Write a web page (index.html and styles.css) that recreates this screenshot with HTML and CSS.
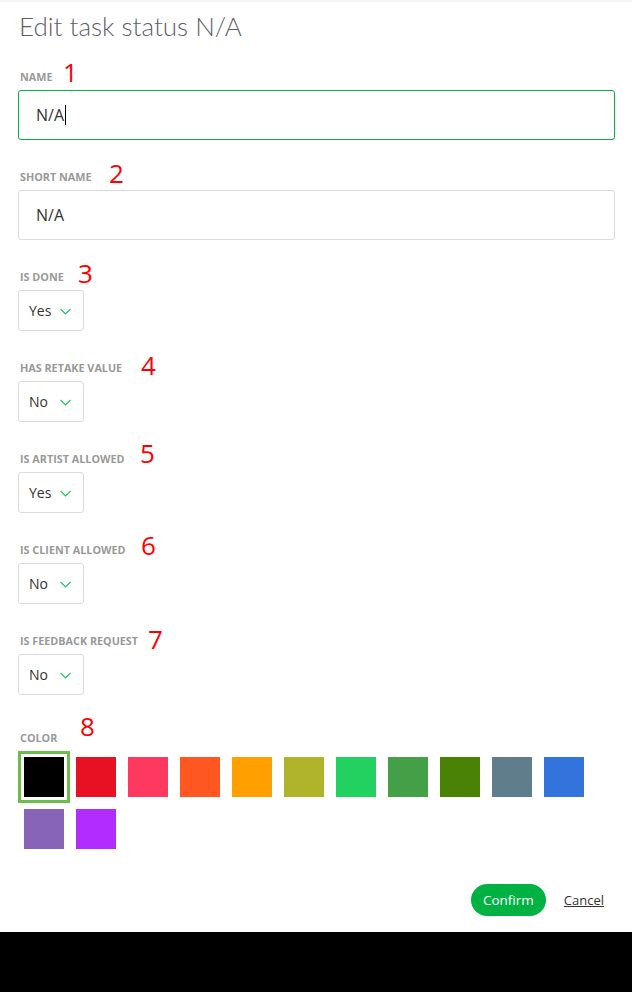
FILE: index.html
```html
<!DOCTYPE html>
<html>
<head>
<meta charset="utf-8">
<link rel="stylesheet" href="styles.css">
</head>
<body>
<div class="panel">
  <h1 class="title">Edit task status N/A</h1>

  <div class="field">
    <div class="label-row"><span class="label">Name</span><span class="num n1">1</span></div>
    <div class="input focused"><span>N/A</span><span class="caret"></span></div>
  </div>

  <div class="field">
    <div class="label-row"><span class="label">Short name</span><span class="num n2">2</span></div>
    <div class="input"><span>N/A</span></div>
  </div>

  <div class="field">
    <div class="label-row"><span class="label">Is done</span><span class="num n3">3</span></div>
    <div class="select"><span class="select-text">Yes</span><svg class="chev" width="11" height="7" viewBox="0 0 11 7"><polyline points="0.5,1 5.5,6 10.5,1" fill="none" stroke="#22c55e" stroke-width="1.2"/></svg></div>
  </div>

  <div class="field">
    <div class="label-row"><span class="label">Has retake value</span><span class="num n4">4</span></div>
    <div class="select"><span class="select-text">No</span><svg class="chev" width="11" height="7" viewBox="0 0 11 7"><polyline points="0.5,1 5.5,6 10.5,1" fill="none" stroke="#22c55e" stroke-width="1.2"/></svg></div>
  </div>

  <div class="field">
    <div class="label-row"><span class="label">Is artist allowed</span><span class="num n5">5</span></div>
    <div class="select"><span class="select-text">Yes</span><svg class="chev" width="11" height="7" viewBox="0 0 11 7"><polyline points="0.5,1 5.5,6 10.5,1" fill="none" stroke="#22c55e" stroke-width="1.2"/></svg></div>
  </div>

  <div class="field">
    <div class="label-row"><span class="label">Is client allowed</span><span class="num n6">6</span></div>
    <div class="select"><span class="select-text">No</span><svg class="chev" width="11" height="7" viewBox="0 0 11 7"><polyline points="0.5,1 5.5,6 10.5,1" fill="none" stroke="#22c55e" stroke-width="1.2"/></svg></div>
  </div>

  <div class="field">
    <div class="label-row"><span class="label">Is feedback request</span><span class="num n7">7</span></div>
    <div class="select"><span class="select-text">No</span><svg class="chev" width="11" height="7" viewBox="0 0 11 7"><polyline points="0.5,1 5.5,6 10.5,1" fill="none" stroke="#22c55e" stroke-width="1.2"/></svg></div>
  </div>

  <div class="field color-field">
    <div class="label-row"><span class="label">Color</span><span class="num n8">8</span></div>
    <div class="colors">
      <div class="swatch-item selected"><div class="swatch c-black"></div></div>
      <div class="swatch-item"><div class="swatch c-red"></div></div>
      <div class="swatch-item"><div class="swatch c-pink"></div></div>
      <div class="swatch-item"><div class="swatch c-orange"></div></div>
      <div class="swatch-item"><div class="swatch c-amber"></div></div>
      <div class="swatch-item"><div class="swatch c-olive"></div></div>
      <div class="swatch-item"><div class="swatch c-green"></div></div>
      <div class="swatch-item"><div class="swatch c-green2"></div></div>
      <div class="swatch-item"><div class="swatch c-green3"></div></div>
      <div class="swatch-item"><div class="swatch c-bluegrey"></div></div>
      <div class="swatch-item"><div class="swatch c-blue"></div></div>
      <div class="swatch-item"><div class="swatch c-purple"></div></div>
      <div class="swatch-item"><div class="swatch c-violet"></div></div>
    </div>
  </div>

  <div class="actions">
    <button class="confirm">Confirm</button>
    <a class="cancel">Cancel</a>
  </div>
</div>
</body>
</html>
```
FILE: styles.css
```css
* { box-sizing: border-box; }
html, body { margin: 0; padding: 0; }
body {
  background: #000;
  font-family: "Open Sans", "Noto Sans", sans-serif;
  color: #333;
}
.panel {
  background: #fff;
  border-top: 2px solid #f4f4f4;
  padding: 0 17px 16px 18px;
}
.title {
  margin: 8px 0 27px 1px;
  font-family: "Lato", "Open Sans", sans-serif;
  font-size: 26px;
  line-height: 32px;
  font-weight: 300;
  color: #5f5d6d;
}
.field { margin-bottom: 29px; }
.color-field { margin-top: 35px; margin-bottom: 0; }
.label-row {
  position: relative;
  height: 16px;
  margin-bottom: 5px;
  padding-left: 2px;
  display: flex;
  align-items: center;
}
.label {
  font-size: 10.8px;
  font-weight: 700;
  text-transform: uppercase;
  color: #999;
  line-height: 16px;
}
.num {
  position: absolute;
  font-size: 26px;
  line-height: 26px;
  color: #f00;
  font-family: "Open Sans", sans-serif;
  font-weight: 400;
}
.n1 { left: 45px; top: -10px; }
.n2 { left: 91px; top: -9px; }
.n3 { left: 60px; top: -9px; }
.n4 { left: 123px; top: -8px; }
.n5 { left: 122px; top: -11px; }
.n6 { left: 123px; top: -10px; }
.n7 { left: 130px; top: -7px; }
.n8 { left: 62px; top: -17px; }

.input {
  height: 50px;
  border: 1px solid #dbdbdb;
  border-radius: 3px;
  padding-left: 17px;
  display: flex;
  align-items: center;
  font-size: 16px;
  color: #333;
}
.input.focused { border-color: #00b242; }
.caret {
  display: inline-block;
  width: 1px;
  height: 20px;
  background: #000;
  margin-left: 1px;
}
.select {
  width: 66px;
  height: 41px;
  border: 1px solid #dbdbdb;
  border-radius: 3px;
  padding-left: 10px;
  display: flex;
  align-items: center;
  font-size: 14px;
  color: #333;
}
.select-text { width: 31px; }
.chev { display: block; margin-top: 2px; }

.colors {
  display: flex;
  flex-wrap: wrap;
}
.swatch-item {
  width: 52px;
  height: 52px;
  padding: 6px;
}
.swatch-item.selected {
  border: 3px solid #6abf4b;
  padding: 3px;
}
.swatch { width: 40px; height: 40px; }
.c-black { background: #000000; }
.c-red { background: #e81123; }
.c-pink { background: #ff3860; }
.c-orange { background: #ff5722; }
.c-amber { background: #ffa000; }
.c-olive { background: #afb42b; }
.c-green { background: #22d160; }
.c-green2 { background: #43a047; }
.c-green3 { background: #498205; }
.c-bluegrey { background: #607d8b; }
.c-blue { background: #3273dc; }
.c-purple { background: #8764b8; }
.c-violet { background: #b02cff; }

.actions {
  margin-top: 29px;
  display: flex;
  justify-content: flex-end;
  align-items: center;
  padding-right: 11px;
}
.confirm {
  height: 32px;
  border: none;
  border-radius: 16px;
  background: #00b242;
  color: #fff;
  font-family: "Open Sans", sans-serif;
  font-size: 13.5px;
  padding: 0 12px;
  margin-right: 18px;
}
.cancel {
  font-size: 13px;
  color: #333;
  text-decoration: underline;
}
```
